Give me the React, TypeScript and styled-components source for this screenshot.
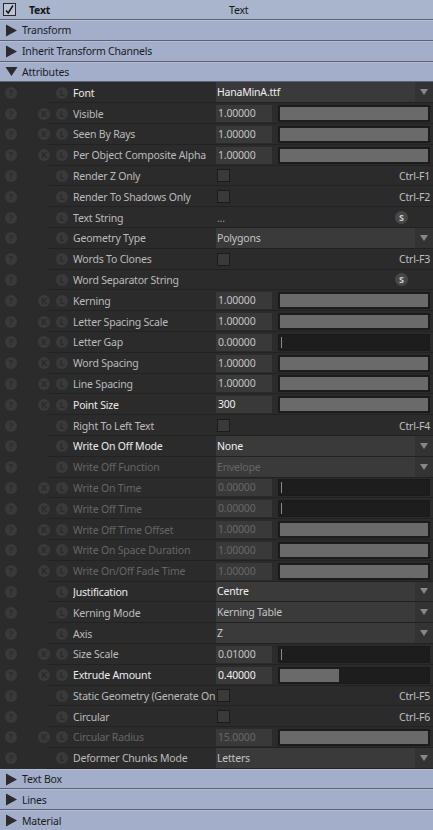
import React from "react";
import styled, { createGlobalStyle } from "styled-components";

// panel de parametros estilo Katana / Houdini

const Global = createGlobalStyle`
  html, body {
    margin: 0;
    padding: 0;
    background: #2b2b2b;
  }
  * { box-sizing: border-box; }
`;

const ROW = 20.8;

type Valor =
  | { tipo: "num"; texto: string; fill: number }
  | { tipo: "drop"; texto: string }
  | { tipo: "check"; atajo: string }
  | { tipo: "str"; texto: string };

type Param = {
  label: string;
  k?: boolean;
  bright?: boolean;
  off?: boolean;
  valor: Valor;
};

const params: Param[] = [
  { label: "Font", bright: true, valor: { tipo: "drop", texto: "HanaMinA.ttf" } },
  { label: "Visible", k: true, valor: { tipo: "num", texto: "1.00000", fill: 1 } },
  { label: "Seen By Rays", k: true, valor: { tipo: "num", texto: "1.00000", fill: 1 } },
  { label: "Per Object Composite Alpha", k: true, valor: { tipo: "num", texto: "1.00000", fill: 1 } },
  { label: "Render Z Only", valor: { tipo: "check", atajo: "Ctrl-F1" } },
  { label: "Render To Shadows Only", valor: { tipo: "check", atajo: "Ctrl-F2" } },
  { label: "Text String", valor: { tipo: "str", texto: "..." } },
  { label: "Geometry Type", valor: { tipo: "drop", texto: "Polygons" } },
  { label: "Words To Clones", valor: { tipo: "check", atajo: "Ctrl-F3" } },
  { label: "Word Separator String", valor: { tipo: "str", texto: "" } },
  { label: "Kerning", k: true, valor: { tipo: "num", texto: "1.00000", fill: 1 } },
  { label: "Letter Spacing Scale", k: true, valor: { tipo: "num", texto: "1.00000", fill: 1 } },
  { label: "Letter Gap", k: true, valor: { tipo: "num", texto: "0.00000", fill: 0 } },
  { label: "Word Spacing", k: true, valor: { tipo: "num", texto: "1.00000", fill: 1 } },
  { label: "Line Spacing", k: true, valor: { tipo: "num", texto: "1.00000", fill: 1 } },
  { label: "Point Size", k: true, bright: true, valor: { tipo: "num", texto: "300", fill: 1 } },
  { label: "Right To Left Text", valor: { tipo: "check", atajo: "Ctrl-F4" } },
  { label: "Write On Off Mode", bright: true, valor: { tipo: "drop", texto: "None" } },
  { label: "Write Off Function", off: true, valor: { tipo: "drop", texto: "Envelope" } },
  { label: "Write On Time", k: true, off: true, valor: { tipo: "num", texto: "0.00000", fill: 0 } },
  { label: "Write Off Time", k: true, off: true, valor: { tipo: "num", texto: "0.00000", fill: 0 } },
  { label: "Write Off Time Offset", k: true, off: true, valor: { tipo: "num", texto: "1.00000", fill: 1 } },
  { label: "Write On Space Duration", k: true, off: true, valor: { tipo: "num", texto: "1.00000", fill: 1 } },
  { label: "Write On/Off Fade Time", k: true, off: true, valor: { tipo: "num", texto: "1.00000", fill: 1 } },
  { label: "Justification", bright: true, valor: { tipo: "drop", texto: "Centre" } },
  { label: "Kerning Mode", valor: { tipo: "drop", texto: "Kerning Table" } },
  { label: "Axis", valor: { tipo: "drop", texto: "Z" } },
  { label: "Size Scale", k: true, valor: { tipo: "num", texto: "0.01000", fill: 0 } },
  { label: "Extrude Amount", k: true, bright: true, valor: { tipo: "num", texto: "0.40000", fill: 0.4 } },
  { label: "Static Geometry (Generate On", valor: { tipo: "check", atajo: "Ctrl-F5" } },
  { label: "Circular", valor: { tipo: "check", atajo: "Ctrl-F6" } },
  { label: "Circular Radius", k: true, off: true, valor: { tipo: "num", texto: "15.0000", fill: 1 } },
  { label: "Deformer Chunks Mode", valor: { tipo: "drop", texto: "Letters" } },
];

const Panel = styled.div`
  width: 433px;
  height: 830px;
  overflow: hidden;
  background: #2b2b2b;
  font-family: "Noto Sans", "Liberation Sans", sans-serif;
  font-size: 10.5px;
  letter-spacing: -0.2px;
`;

const TopBar = styled.div`
  height: 20px;
  display: flex;
  align-items: center;
  background: #a9b4cd;
  border-bottom: 1px solid #5f6474;
  color: #161616;
  padding-left: 3px;
`;

const TopCheck = styled.div`
  width: 13px;
  height: 13px;
  border: 1px solid #2a2a2a;
  background: #b9c3da;
  display: flex;
  align-items: center;
  justify-content: center;
`;

const TopName = styled.div`
  font-weight: bold;
  margin-left: 13px;
  width: 185px;
`;

const TopType = styled.div`
  margin-left: 15px;
`;

const Section = styled.div`
  height: ${ROW}px;
  display: flex;
  align-items: center;
  background: #a3aecb;
  border-bottom: 1px solid #5d6171;
  border-top: 1px solid #b4bdd4;
  color: #1b1b1b;
  padding-left: 5px;
  gap: 4px;
`;

const Row = styled.div`
  position: relative;
  height: ${ROW}px;
  display: flex;
  align-items: center;
  &::after {
    content: "";
    position: absolute;
    left: 47px;
    right: 0;
    bottom: 0;
    height: 1px;
    background: #222222;
  }
`;

const Bolita = styled.span<{ $x: number; $oculta?: boolean }>`
  width: 12px;
  height: 12px;
  border-radius: 50%;
  background: #3a3a3a;
  color: #2a2a2a;
  font-size: 9px;
  font-weight: bold;
  letter-spacing: 0;
  line-height: 12px;
  text-align: center;
  flex: none;
  margin-left: ${(p) => p.$x}px;
  visibility: ${(p) => (p.$oculta ? "hidden" : "visible")};
  position: relative;
  z-index: 1;
`;

const Label = styled.div<{ $bright?: boolean; $off?: boolean }>`
  width: 143px;
  margin-left: 5px;
  white-space: nowrap;
  overflow: hidden;
  color: ${(p) => (p.$off ? "#666666" : p.$bright ? "#ececec" : "#bcbcbc")};
`;

const Valores = styled.div`
  flex: 1;
  height: 100%;
  display: flex;
  align-items: center;
  padding-right: 3px;
`;

const NumBox = styled.div<{ $bright?: boolean; $off?: boolean }>`
  width: 56px;
  height: 17px;
  background: #393939;
  padding-left: 2px;
  line-height: 17px;
  color: ${(p) => (p.$off ? "#676767" : p.$bright ? "#f0f0f0" : "#c4c4c4")};
`;

const Slider = styled.div`
  flex: 1;
  height: 17px;
  margin-left: 6px;
  background: #1d1d1d;
  border: 1px solid #1a1a1a;
  padding: 1px;
  position: relative;
`;

const SliderFill = styled.div`
  height: 100%;
  background: #6a6a6a;
`;

const Tick = styled.div`
  position: absolute;
  left: 2px;
  top: 2px;
  bottom: 2px;
  width: 1px;
  background: #8a8a8a;
`;

const Drop = styled.div`
  flex: 1;
  height: 100%;
  display: flex;
  align-items: stretch;
  border-bottom: 1px solid #232323;
`;

const DropText = styled.div<{ $bright?: boolean; $off?: boolean }>`
  flex: 1;
  background: #3a3a3a;
  padding-left: 1px;
  display: flex;
  align-items: center;
  color: ${(p) => (p.$off ? "#666666" : p.$bright ? "#f0f0f0" : "#c4c4c4")};
`;

const DropArrow = styled.div`
  width: 18px;
  background: #333333;
  display: flex;
  align-items: center;
  justify-content: center;
`;

const CheckBox = styled.div`
  width: 13px;
  height: 13px;
  margin-left: 1px;
  background: #3a3a3a;
  border: 1px solid #1b1b1b;
`;

const Atajo = styled.div`
  margin-left: auto;
  color: #c0c0c0;
`;

const StrText = styled.div`
  padding-left: 1px;
  color: #9a9a9a;
`;

const SBadge = styled.span`
  margin-left: auto;
  margin-right: 22px;
  width: 13px;
  height: 13px;
  border-radius: 50%;
  background: #474747;
  color: #cfcfcf;
  font-size: 9px;
  font-weight: bold;
  letter-spacing: 0;
  line-height: 13px;
  text-align: center;
`;

function Triangulo({ abierto }: { abierto?: boolean }) {
  return (
    <svg width="13" height="13" viewBox="0 0 13 13">
      {abierto ? (
        <polygon points="0.5,2 12.5,2 6.5,11" fill="#2b2b2b" />
      ) : (
        <polygon points="1,0.5 12,6.5 1,12.5" fill="#2b2b2b" />
      )}
    </svg>
  );
}

function Flechita() {
  return (
    <svg width="8" height="6" viewBox="0 0 8 6">
      <polygon points="0,0 8,0 4,6" fill="#888888" />
    </svg>
  );
}

function ValorCelda({ p }: { p: Param }) {
  const v = p.valor;
  if (v.tipo === "num") {
    return (
      <Valores>
        <NumBox $bright={p.bright} $off={p.off}>
          {v.texto}
        </NumBox>
        <Slider>
          {v.fill > 0 ? <SliderFill style={{ width: `${v.fill * 100}%` }} /> : <Tick />}
        </Slider>
      </Valores>
    );
  }
  if (v.tipo === "drop") {
    return (
      <Valores style={{ paddingRight: 0 }}>
        <Drop>
          <DropText $bright={p.bright} $off={p.off}>
            {v.texto}
          </DropText>
          <DropArrow>
            <Flechita />
          </DropArrow>
        </Drop>
      </Valores>
    );
  }
  if (v.tipo === "check") {
    return (
      <Valores>
        <CheckBox />
        <Atajo>{v.atajo}</Atajo>
      </Valores>
    );
  }
  return (
    <Valores>
      <StrText>{v.texto}</StrText>
      <SBadge>S</SBadge>
    </Valores>
  );
}

function SeccionCabecera({ titulo, abierto }: { titulo: string; abierto?: boolean }) {
  return (
    <Section>
      <Triangulo abierto={abierto} />
      <span>{titulo}</span>
    </Section>
  );
}

export default function App() {
  return (
    <>
      <Global />
      <Panel>
        <TopBar>
          <TopCheck>
            <svg width="11" height="11" viewBox="0 0 11 11">
              <path d="M2 6.5 L4.2 9 L9 1.5" stroke="#111" strokeWidth="1.4" fill="none" />
            </svg>
          </TopCheck>
          <TopName>Text</TopName>
          <TopType>Text</TopType>
        </TopBar>
        <SeccionCabecera titulo="Transform" />
        <SeccionCabecera titulo="Inherit Transform Channels" />
        <SeccionCabecera titulo="Attributes" abierto />
        {params.map((p) => (
          <Row key={p.label}>
            <Bolita $x={5}>?</Bolita>
            <Bolita $x={21} $oculta={!p.k}>K</Bolita>
            <Bolita $x={6}>L</Bolita>
            <Label $bright={p.bright} $off={p.off}>
              {p.label}
            </Label>
            <ValorCelda p={p} />
          </Row>
        ))}
        <SeccionCabecera titulo="Text Box" />
        <SeccionCabecera titulo="Lines" />
        <SeccionCabecera titulo="Material" />
      </Panel>
    </>
  );
}
